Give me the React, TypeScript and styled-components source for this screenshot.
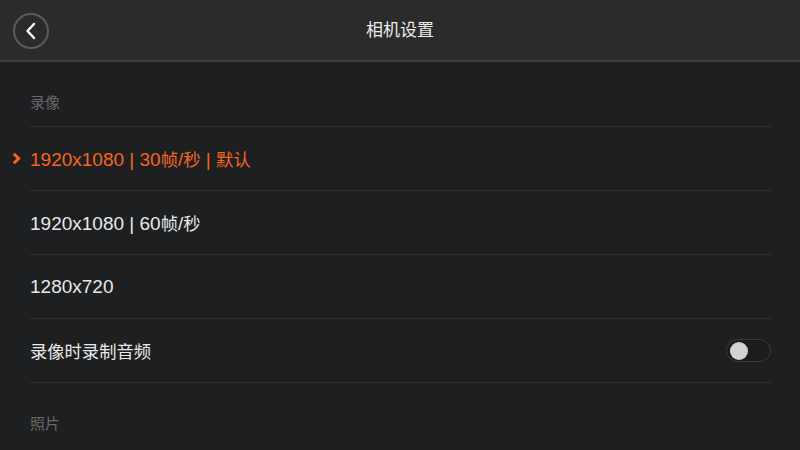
import React from "react";
import styled, { createGlobalStyle } from "styled-components";

const GlobalStyle = createGlobalStyle`
  html, body {
    margin: 0;
    padding: 0;
    background: #1e1f21;
  }
  * {
    box-sizing: border-box;
  }
`;

const Page = styled.div`
  width: 800px;
  height: 450px;
  overflow: hidden;
  background: #1e1f21;
  font-family: "Liberation Sans", "Noto Sans CJK SC", sans-serif;
`;

// 상단 바
const TopBar = styled.header`
  height: 62px;
  background: #2b2b2b;
  border-bottom: 2px solid #3b3d3c;
  display: grid;
  grid-template-columns: 62px 1fr 62px;
  align-items: center;
`;

const BackButton = styled.button`
  width: 36px;
  height: 36px;
  margin-left: 13px;
  margin-top: 1px;
  border-radius: 50%;
  border: 2px solid #5b5b5b;
  background: transparent;
  padding: 0;
  display: flex;
  align-items: center;
  justify-content: center;
  cursor: pointer;
`;

const Title = styled.h1`
  margin: 0;
  text-align: center;
  font-size: 17px;
  font-weight: 400;
  color: #ececec;
  line-height: 20px;
  padding-top: 2px;
`;

const List = styled.div`
  padding: 0 29px 0 30px;
`;

const SectionLabel = styled.div<{ $last?: boolean }>`
  padding: 31px 0 13px;
  line-height: 20px;
  font-size: 15px;
  color: #686868;
  border-bottom: 1px solid ${(p) => (p.$last ? "transparent" : "#303133")};
`;

const Row = styled.div<{ $active?: boolean }>`
  position: relative;
  height: 64px;
  display: flex;
  align-items: center;
  justify-content: space-between;
  border-bottom: 1px solid #303133;
  font-size: 19px;
  color: ${(p) => (p.$active ? "#f4661f" : "#e8e8e8")};
`;

// 한자 부분은 숫자보다 조금 작게
const Cjk = styled.span`
  font-size: 17.3px;
`;

const Marker = styled.svg`
  position: absolute;
  left: -18px;
  top: 25px;
`;

const Toggle = styled.div<{ $on?: boolean }>`
  width: 45px;
  height: 23px;
  border-radius: 12px;
  border: 1px solid #3a3b3c;
  background: #1b1c1e;
  display: flex;
  align-items: center;
  justify-content: ${(p) => (p.$on ? "flex-end" : "flex-start")};
  padding: 0 3px;
`;

const Knob = styled.div`
  width: 18px;
  height: 18px;
  border-radius: 50%;
  background: #d2d2d2;
`;

const videoModes = [
  { id: "1080-30", label: "1920x1080 | 30帧/秒 | 默认", active: true },
  { id: "1080-60", label: "1920x1080 | 60帧/秒", active: false },
  { id: "720", label: "1280x720", active: false },
];

function Mixed({ text }: { text: string }) {
  const parts = text.split(/([\u4e00-\u9fff]+)/).filter(Boolean);
  return (
    <span>
      {parts.map((part, i) =>
        /[\u4e00-\u9fff]/.test(part) ? <Cjk key={i}>{part}</Cjk> : <React.Fragment key={i}>{part}</React.Fragment>
      )}
    </span>
  );
}

export default function App() {
  return (
    <Page>
      <GlobalStyle />
      <TopBar>
        <BackButton aria-label="back">
          <svg width="14" height="18" viewBox="0 0 14 18">
            <path
              d="M10 2 L3.5 9 L10 16"
              fill="none"
              stroke="#ffffff"
              strokeWidth="2.4"
              strokeLinecap="round"
              strokeLinejoin="round"
            />
          </svg>
        </BackButton>
        <Title>相机设置</Title>
        <div />
      </TopBar>
      <List>
        <SectionLabel>录像</SectionLabel>
        {videoModes.map((m) => (
          <Row key={m.id} $active={m.active}>
            {m.active && (
              <Marker width="9" height="13" viewBox="0 0 9 13">
                <path
                  d="M1.8 1.8 L6.6 6.5 L1.8 11.2"
                  fill="none"
                  stroke="#f4661f"
                  strokeWidth="3"
                  strokeLinejoin="miter"
                />
              </Marker>
            )}
            <Mixed text={m.label} />
          </Row>
        ))}
        <Row>
          <Mixed text="录像时录制音频" />
          <Toggle>
            <Knob />
          </Toggle>
        </Row>
        <SectionLabel $last>照片</SectionLabel>
      </List>
    </Page>
  );
}
